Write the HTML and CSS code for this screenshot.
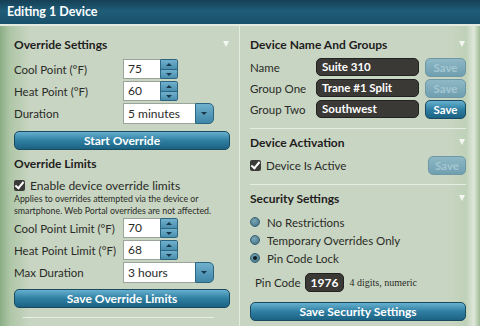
FILE: index.html
```html
<!DOCTYPE html>
<html>
<head>
    <title>Editing 1 Device</title>
    <link rel="stylesheet" href="styles.css">
</head>
<body>
    <div class="window">
        <div class="titlebar">Editing 1 Device</div>
        <div class="columns">
            <div class="col left">
                <div class="heading">Override Settings <span class="caret"></span></div>
                <div class="row first">
                    <span class="label">Cool Point (°F)</span>
                    <span class="spin"><span class="num">75</span><span class="arrows"><i class="up"></i><i class="down"></i></span></span>
                </div>
                <div class="row">
                    <span class="label">Heat Point (°F)</span>
                    <span class="spin"><span class="num">60</span><span class="arrows"><i class="up"></i><i class="down"></i></span></span>
                </div>
                <div class="row">
                    <span class="label">Duration</span>
                    <span class="select"><span class="value">5 minutes</span><span class="drop"><i class="down"></i></span></span>
                </div>
                <button class="btn wide start">Start Override</button>

                <div class="heading limits">Override Limits</div>
                <label class="check big"><span class="box"></span>Enable device override limits</label>
                <p class="note">Applies to overrides attempted via the device or smartphone. Web Portal overrides are not affected.</p>
                <div class="row first-limit">
                    <span class="label">Cool Point Limit (°F)</span>
                    <span class="spin"><span class="num">70</span><span class="arrows"><i class="up"></i><i class="down"></i></span></span>
                </div>
                <div class="row">
                    <span class="label">Heat Point Limit (°F)</span>
                    <span class="spin"><span class="num">68</span><span class="arrows"><i class="up"></i><i class="down"></i></span></span>
                </div>
                <div class="row">
                    <span class="label">Max Duration</span>
                    <span class="select"><span class="value">3 hours</span><span class="drop"><i class="down"></i></span></span>
                </div>
                <button class="btn wide save-limits">Save Override Limits</button>
                <div class="rule short"></div>
            </div>

            <div class="col right">
                <div class="heading">Device Name And Groups <span class="caret"></span></div>
                <div class="field first">
                    <span class="label">Name</span>
                    <span class="dark">Suite 310</span>
                    <button class="btn small off">Save</button>
                </div>
                <div class="field">
                    <span class="label">Group One</span>
                    <span class="dark">Trane #1 Split</span>
                    <button class="btn small off">Save</button>
                </div>
                <div class="field">
                    <span class="label">Group Two</span>
                    <span class="dark">Southwest</span>
                    <button class="btn small">Save</button>
                </div>
                <div class="rule"></div>

                <div class="heading section">Device Activation <span class="caret"></span></div>
                <div class="active-row">
                    <label class="check"><span class="box"></span>Device Is Active</label>
                    <button class="btn small off">Save</button>
                </div>
                <div class="rule second"></div>

                <div class="heading section">Security Settings <span class="caret"></span></div>
                <div class="radios">
                    <label class="radio"><span class="dot"></span>No Restrictions</label>
                    <label class="radio"><span class="dot"></span>Temporary Overrides Only</label>
                    <label class="radio on"><span class="dot"></span>Pin Code Lock</label>
                </div>
                <div class="pin">
                    <span>Pin Code</span>
                    <span class="dark code">1976</span>
                    <span class="hint">4 digits, numeric</span>
                </div>
                <button class="btn wide save-security">Save Security Settings</button>
            </div>
        </div>
    </div>
</body>
</html>
```

FILE: styles.css
```css
:root {
    --text: #2a2b28;
    --btn-border: #1a4a60;
    --dark-field: #3a3936;
}

body {
    margin: 0;
    font-family: Lato, "Open Sans", sans-serif;
    color: var(--text);
}

.window {
    width: 480px;
    height: 326px;
    overflow: hidden;
    background:
        linear-gradient(90deg, #8aad84 0, #aec6a6 10px, rgba(200, 214, 195, 0) 30px),
        linear-gradient(270deg, #9fbb96 0, #dfe8da 6px, #bfd1b8 14px, rgba(200, 214, 195, 0) 30px),
        #c8d5c2;
}

.titlebar {
    height: 24px;
    padding-left: 7px;
    line-height: 24px;
    font-size: 12.5px;
    font-weight: bold;
    color: #fff;
    background: linear-gradient(#153f54, #1f5d78 45%, #185069);
    border-bottom: 2px solid #e3ebe0;
}

.columns {
    display: grid;
    grid-template-columns: 240px 240px;
}

.col {
    display: flex;
    flex-direction: column;
    align-items: flex-start;
}

.left {
    padding: 0 9px 0 14px;
    border-right: 1px solid #e4ebe1;
    height: 300px;
    width: 216px;
}

.right {
    padding: 0 14px 0 10px;
}

.heading {
    align-self: stretch;
    display: flex;
    justify-content: space-between;
    align-items: center;
    height: 16px;
    margin-top: 10px;
    font-size: 12px;
    font-weight: bold;
    color: #1f201d;
}

.caret {
    width: 0;
    height: 0;
    border-left: 3px solid transparent;
    border-right: 3px solid transparent;
    border-top: 6px solid #f4f7f2;
    margin-right: 1px;
}

.row {
    display: flex;
    align-items: center;
    height: 20px;
    margin-top: 2px;
    font-size: 11.5px;
}

.row.first {
    margin-top: 7px;
}

.row.first-limit {
    margin-top: 2px;
}

.label {
    width: 109px;
}

.spin {
    display: flex;
    height: 20px;
}

.num {
    width: 32px;
    padding-left: 4px;
    background: #fff;
    border: 1px solid #9aa49a;
    border-right: none;
    line-height: 18px;
    font-size: 12px;
}

.arrows {
    display: flex;
    flex-direction: column;
    width: 16px;
    border: 1px solid #2c6580;
    border-radius: 0 2px 2px 0;
}

.arrows .up,
.arrows .down {
    flex: 1;
    position: relative;
    background: linear-gradient(#6fb0cc, #4a8fb0);
}

.arrows .up {
    border-bottom: 1px solid #2c6580;
}

.up::after,
.down::after {
    content: "";
    position: absolute;
    left: 5px;
    top: 3px;
    border-left: 3px solid transparent;
    border-right: 3px solid transparent;
}

.up::after {
    border-bottom: 3px solid #17384a;
}

.down::after {
    border-top: 3px solid #17384a;
}

.select {
    display: flex;
    height: 21px;
    margin-top: 1px;
}

.select .value {
    width: 67px;
    padding-left: 4px;
    background: #fff;
    border: 1px solid #9aa49a;
    border-right: none;
    line-height: 19px;
    font-size: 12px;
}

.drop {
    width: 17px;
    position: relative;
    background: linear-gradient(#6fb0cc, #3f86a8);
    border: 1px solid #2c6580;
    border-radius: 0 5px 5px 0;
}

.drop .down::after {
    left: 5px;
    top: 8px;
}

.btn {
    font-family: inherit;
    font-weight: bold;
    color: #fff;
    background: linear-gradient(#66b0cf, #2f7fa2 50%, #1c6283);
    border: 1px solid var(--btn-border);
    border-radius: 5px;
    padding: 0;
    cursor: pointer;
}

.btn.wide {
    align-self: stretch;
    height: 19px;
    font-size: 12px;
    line-height: 16px;
}

.start {
    margin-top: 8px;
}

.save-limits {
    margin-top: 7px;
}

.heading.limits {
    margin-top: 5px;
}

.check {
    display: flex;
    align-items: center;
    font-size: 11.5px;
}

.check.big {
    margin-top: 7px;
    height: 14px;
    font-size: 12px;
}

.box {
    width: 11px;
    height: 11px;
    margin-right: 5px;
    position: relative;
    background: #3b3b39;
    border-radius: 2px;
}

.box::after {
    content: "";
    position: absolute;
    left: 3px;
    top: 0;
    width: 3px;
    height: 7px;
    border: solid #fff;
    border-width: 0 2px 2px 0;
    transform: rotate(40deg);
}

.note {
    margin: 1px 0 0;
    font-size: 8.8px;
    line-height: 11.5px;
}

.rule {
    align-self: stretch;
    height: 1px;
    margin-top: 10px;
    background: #e6ede3;
}

.rule.short {
    margin: 9px 16px 0 9px;
}

.field {
    display: flex;
    align-items: center;
    height: 18px;
    margin-top: 3px;
    font-size: 11.5px;
}

.field.first {
    margin-top: 6px;
}

.field .label {
    width: 66px;
}

.dark {
    background: var(--dark-field);
    border: 1px solid #222;
    border-radius: 5px;
    color: #fff;
    font-weight: bold;
    font-size: 11.5px;
}

.field .dark {
    width: 96px;
    height: 16px;
    padding-left: 5px;
    line-height: 16px;
}

.btn.small {
    width: 41px;
    height: 19px;
    margin-left: 6px;
    font-size: 11.5px;
}

.btn.off {
    color: #a4c6d1;
    background: linear-gradient(#8fb8c5, #6f9fb0);
    border-color: #6f98a6;
}

.heading.section {
    margin-top: 5px;
}

.active-row {
    align-self: stretch;
    display: flex;
    justify-content: space-between;
    align-items: center;
    margin-top: 6px;
    height: 19px;
}

.active-row .btn {
    width: 38px;
}

.rule.second {
    margin-top: 9px;
}

.radios {
    display: flex;
    flex-direction: column;
    margin-top: 7px;
}

.radio {
    display: flex;
    align-items: center;
    height: 18px;
    font-size: 11.5px;
}

.dot {
    width: 10px;
    height: 10px;
    margin-right: 7px;
    border-radius: 50%;
    background: radial-gradient(circle at 40% 35%, #7aa6b6, #3f6f83);
    border: 1px solid #35606f;
    box-sizing: border-box;
    position: relative;
}

.radio.on .dot::after {
    content: "";
    position: absolute;
    left: 2px;
    top: 2px;
    width: 4px;
    height: 4px;
    border-radius: 50%;
    background: #0e1c24;
}

.pin {
    display: flex;
    align-items: center;
    margin-top: 6px;
    padding-left: 5px;
    height: 19px;
    font-size: 11.5px;
}

.pin .code {
    margin-left: 4px;
    padding: 0 5px;
    height: 17px;
    line-height: 17px;
    font-size: 12px;
}

.hint {
    margin-left: 5px;
    font-family: "Liberation Serif", serif;
    font-size: 10px;
}

.save-security {
    margin-top: 10px;
}
```
